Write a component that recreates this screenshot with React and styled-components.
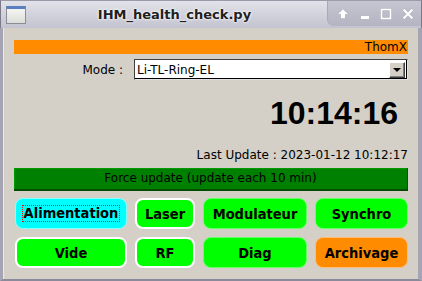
import React from "react";
import styled, { createGlobalStyle } from "styled-components";

const Global = createGlobalStyle`
    html, body {
        margin: 0;
        padding: 0;
        background: #d4d0c8;
    }
    * { box-sizing: border-box; }
`;

const Frame = styled.div`
    width: 422px;
    height: 281px;
    display: flex;
    flex-direction: column;
    background: #a9a9b8;
    font-family: "DejaVu Sans", sans-serif;
`;

const TitleBar = styled.div`
    height: 28px;
    display: flex;
    align-items: center;
    background: linear-gradient(#e2e2ea, #cfcfda 60%, #c4c4d0);
    border-left: 1px solid #7a7a88;
    border-right: 1px solid #7a7a88;
    border-top: 1px solid #9a9aa8;
`;

const AppIcon = styled.div`
    width: 20px;
    height: 18px;
    margin-left: 5px;
    border: 1px solid #8c8c96;
    background: linear-gradient(#f4f4f2, #dcdcd8);
    border-top: 3px solid #5a7fc0;
`;

const Title = styled.div`
    flex: 1;
    text-align: center;
    font-weight: bold;
    font-size: 13px;
    color: #202020;
    text-shadow: 0 0 3px #ffffff, 0 0 2px #ffffff;
    padding-right: 4px;
`;

const Controls = styled.div`
    align-self: stretch;
    width: 94px;
    margin-bottom: 2px;
    display: flex;
    align-items: center;
    justify-content: space-around;
    padding: 0 2px 0 4px;
    background: linear-gradient(#c6c6d2, #b4b4c2);
    border-bottom-left-radius: 7px;
    border-left: 1px solid #a8a8b6;
`;

const Ctrl = styled.svg`
    width: 14px;
    height: 14px;
    filter: drop-shadow(0 0 0.5px #666677);
`;

const Body = styled.div`
    flex: 1;
    background: #d4d0c8;
    border-left: 3px solid #a4a4b4;
    border-right: 4px solid #a4a4b4;
    border-bottom: 2px solid #8a8a9a;
    box-shadow: inset 1px 0 0 #e8e8e8;
    padding: 12px 10px 0 11px;
    display: flex;
    flex-direction: column;
`;

const Banner = styled.div`
    height: 14px;
    background: #ff8c00;
    color: #000;
    font-size: 12px;
    line-height: 14px;
    text-align: right;
    padding-right: 1px;
`;

const ModeRow = styled.div`
    margin-top: 5px;
    display: flex;
    align-items: center;
    justify-content: flex-end;
    gap: 11px;
    font-size: 12px;
    color: #000;
`;

const Combo = styled.div`
    width: 274px;
    height: 21px;
    display: flex;
    align-items: center;
    background: #fff;
    border: 1px solid;
    border-color: #404040 #e0e0e0 #e0e0e0 #404040;
    box-shadow: inset -1px -1px 0 #000;
    padding: 1px 2px 0 2px;
`;

const ComboText = styled.span`
    flex: 1;
    font-size: 12px;
`;

const ArrowBtn = styled.div`
    width: 16px;
    height: 16px;
    background: #d4d0c8;
    border: 1px solid;
    border-color: #ffffff #404040 #404040 #ffffff;
    box-shadow: inset -1px -1px 0 #808080;
    display: flex;
    align-items: center;
    justify-content: center;
    margin-bottom: 1px;
`;

const Triangle = styled.div`
    width: 0;
    height: 0;
    border-left: 4px solid transparent;
    border-right: 4px solid transparent;
    border-top: 4px solid #000;
`;

const Clock = styled.div`
    margin-top: 15px;
    text-align: right;
    padding-right: 10px;
    font-family: "Liberation Sans", Arial, sans-serif;
    font-weight: bold;
    font-size: 32px;
    line-height: 36px;
    color: #000;
`;

const LastUpdate = styled.div`
    margin-top: 17px;
    text-align: right;
    font-size: 12px;
    line-height: 14px;
    color: #000;
`;

const ForceBar = styled.div`
    margin-top: 6px;
    height: 23px;
    background: #008000;
    border-bottom: 2px solid #004c00;
    border-right: 1px solid #005a00;
    box-shadow: inset 1px 1px 0 #009a00;
    color: #000;
    font-size: 12px;
    line-height: 21px;
    text-align: center;
`;

const Grid = styled.div`
    margin-top: 7px;
    margin-left: 1px;
    display: grid;
    grid-template-columns: 112px 60px 104px 93px;
    grid-auto-rows: 31px;
    column-gap: 8px;
    row-gap: 8px;
`;

const colors = {
    green: ["#00ff00", "#66ff66"],
    cyan: ["#00ffff", "#88ffff"],
    orange: ["#ff8c00", "#ffbb77"],
};

const Button = styled.div`
    display: flex;
    align-items: center;
    justify-content: center;
    border-radius: 8px;
    background: ${(p) => colors[p.$tone][0]};
    border: ${(p) => (p.$white ? "2px solid #ffffff" : `1px solid ${colors[p.$tone][1]}`)};
    font-family: "DejaVu Sans Condensed", "DejaVu Sans", sans-serif;
    font-stretch: condensed;
    font-weight: bold;
    font-size: 14.5px;
    color: #000;
`;

const Focus = styled.span`
    outline: 1px dotted #ff0000;
    line-height: 15px;
    padding: 0 1px;
`;

const buttons = [
    { label: "Alimentation", tone: "cyan", focus: true },
    { label: "Laser", tone: "green", white: true },
    { label: "Modulateur", tone: "green" },
    { label: "Synchro", tone: "green" },
    { label: "Vide", tone: "green", white: true },
    { label: "RF", tone: "green", white: true },
    { label: "Diag", tone: "green" },
    { label: "Archivage", tone: "orange" },
];

const App = () => {
    return (
        <Frame>
            <Global />
            <TitleBar>
                <AppIcon />
                <Title>IHM_health_check.py</Title>
                <Controls>
                    <Ctrl viewBox="0 0 14 14">
                        <path d="M7 2 L12 7 L9 7 L9 11.5 L5 11.5 L5 7 L2 7 Z" fill="#fff" />
                    </Ctrl>
                    <Ctrl viewBox="0 0 14 14">
                        <rect x="3" y="9" width="8" height="3" fill="#fff" />
                    </Ctrl>
                    <Ctrl viewBox="0 0 14 14">
                        <rect x="2.5" y="2.5" width="9" height="9" fill="none" stroke="#fff" strokeWidth="2" />
                    </Ctrl>
                    <Ctrl viewBox="0 0 14 14">
                        <path d="M2.5 2.5 L11.5 11.5 M11.5 2.5 L2.5 11.5" stroke="#fff" strokeWidth="2.4" />
                    </Ctrl>
                </Controls>
            </TitleBar>
            <Body>
                <Banner>ThomX</Banner>
                <ModeRow>
                    Mode :
                    <Combo>
                        <ComboText>Li-TL-Ring-EL</ComboText>
                        <ArrowBtn><Triangle /></ArrowBtn>
                    </Combo>
                </ModeRow>
                <Clock>10:14:16</Clock>
                <LastUpdate>Last Update : 2023-01-12 10:12:17</LastUpdate>
                <ForceBar>Force update (update each 10 min)</ForceBar>
                <Grid>
                    {buttons.map((b) => (
                        <Button key={b.label} $tone={b.tone} $white={b.white}>
                            {b.focus ? <Focus>{b.label}</Focus> : b.label}
                        </Button>
                    ))}
                </Grid>
            </Body>
        </Frame>
    );
};

export default App;
